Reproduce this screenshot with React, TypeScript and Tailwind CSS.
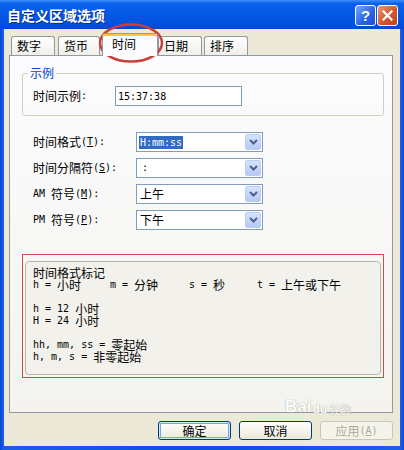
import React from "react";

function M({ t }: { t: string }) {
  const parts = t.match(/[\u2E80-\u9FFF\uFF00-\uFFEF]+|[^\u2E80-\u9FFF\uFF00-\uFFEF]+/g) || [];
  return (
    <>
      {parts.map((p, i) =>
        /[\u2E80-\u9FFF\uFF00-\uFFEF]/.test(p[0]) ? (
          <span key={i} className="inline-block align-top h-[12px] leading-[12px] whitespace-pre [font-family:'Noto_Sans_CJK_SC',sans-serif] text-[12px]">
            {p}
          </span>
        ) : (
          <span key={i} className="inline-block align-top h-[12px] leading-[12px] whitespace-pre [font-family:'DejaVu_Sans_Mono',monospace] text-[10px]">
            {p}
          </span>
        )
      )}
    </>
  );
}

function Label({ pre, ul }: { pre: string; ul: string }) {
  return (
    <span className="whitespace-pre">
      <M t={pre} />
      <span className="inline-block align-top h-[12px] leading-[12px] [font-family:'DejaVu_Sans_Mono',monospace] text-[10px]">
        (<span className="underline underline-offset-1">{ul}</span>):
      </span>
    </span>
  );
}

function Chevron() {
  return (
    <svg width="9" height="6" viewBox="0 0 9 6">
      <path d="M1 1 L4.5 4.5 L8 1" stroke="#4d6185" strokeWidth="2" fill="none" />
    </svg>
  );
}

function Combo({ children }: { children: React.ReactNode }) {
  return (
    <div className="w-[127px] h-[20px] border border-[#7f9db9] bg-white flex items-center pl-[2px] pr-[1px]">
      <div className="flex-1 flex items-center leading-[14px]">{children}</div>
      <div className="w-[16px] h-[16px] rounded-[2px] border border-[#b9cdf5] bg-[linear-gradient(180deg,#d6e3fd,#b5c9f5)] flex items-center justify-center">
        <Chevron />
      </div>
    </div>
  );
}

function Tab({ label, cls }: { label: string; cls: string }) {
  return (
    <div
      className={
        "h-[19px] border border-b-0 border-[#919b9c] rounded-t-[3px] bg-[linear-gradient(180deg,#fefefe,#f0efe9)] pl-[5px] leading-[18px] text-[12px] " +
        cls
      }
    >
      {label}
    </div>
  );
}

function Btn({ children, variant }: { children: React.ReactNode; variant: "default" | "normal" | "disabled" }) {
  const base =
    "w-[73px] h-[19px] rounded-[3px] border flex items-center justify-center text-[12px] leading-[14px] ";
  if (variant === "default")
    return (
      <div className={base + "border-[#003c74] bg-[linear-gradient(180deg,#ffffff,#ece9d8)] shadow-[inset_0_0_0_1px_#cee7ff,inset_0_0_0_2px_#7aa2ea]"}>
        {children}
      </div>
    );
  if (variant === "normal")
    return (
      <div className={base + "border-[#003c74] bg-[linear-gradient(180deg,#ffffff,#ece9d8)]"}>{children}</div>
    );
  return (
    <div className={base + "border-[#c9c7ba] bg-[#f5f4ea] text-[#aca899]"}>{children}</div>
  );
}

export default function App() {
  return (
    <div className="relative w-[404px] h-[450px] overflow-hidden flex flex-col bg-[linear-gradient(90deg,#0843d0,#1a5ee8_3px,#0a50dc_50%,#1a5ee8_calc(100%-3px),#0843d0)] [font-family:'Noto_Sans_CJK_SC',sans-serif] text-[12px] text-black">
      {/* title bar */}
      <div className="h-[29px] shrink-0 flex items-center pl-[7px] pr-[6px] bg-[linear-gradient(180deg,#3d8ff7_0%,#0b62e9_12%,#0459e6_45%,#0252df_78%,#0046cf_100%)]">
        <span className="text-white font-bold text-[14px] leading-[16px] [text-shadow:1px_1px_0_#0a2a8a]">
          自定义区域选项
        </span>
        <div className="ml-auto flex gap-[1px] mt-[1px]">
          <div className="w-[21px] h-[21px] rounded-[3px] border border-white bg-[linear-gradient(135deg,#76a8f8,#2a62e6_60%,#1c50d6)] flex items-center justify-center">
            <span className="text-white font-bold text-[15px] leading-[15px] [font-family:'Liberation_Sans',sans-serif]">?</span>
          </div>
          <div className="w-[21px] h-[21px] rounded-[3px] border border-white bg-[linear-gradient(135deg,#ec9a7c,#d4552f_55%,#c0401d)] flex items-center justify-center">
            <svg width="11" height="11" viewBox="0 0 11 11">
              <path d="M1.5 1.5 L9.5 9.5 M9.5 1.5 L1.5 9.5" stroke="white" strokeWidth="2.2" strokeLinecap="square" />
            </svg>
          </div>
        </div>
      </div>

      {/* body */}
      <div className="flex-1 mx-[4px] mb-[4px] bg-[#ece9d8] flex flex-col">
        {/* tabs */}
        <div className="h-[26px] flex items-end">
          <Tab label="数字" cls="ml-[7px] w-[44px]" />
          <Tab label="货币" cls="ml-[3px] w-[42px]" />
          <div className="relative z-10 ml-[2px] w-[56px] h-[23px] -mb-px border border-b-0 border-[#919b9c] border-t-[#e68b2c] rounded-t-[3px] bg-[#fcfcfe] shadow-[inset_0_2px_0_#ffc83c] pl-[9px] pt-[2px] leading-[16px] text-[12px]">
            时间
          </div>
          <Tab label="日期" cls="w-[44px]" />
          <Tab label="排序" cls="ml-[2px] w-[44px]" />
        </div>

        {/* panel */}
        <div className="ml-[5px] w-[384px] h-[358px] border border-[#919b9c] bg-[linear-gradient(180deg,#fcfcfe,#f4f3ee)] flex flex-col">
          <fieldset className="ml-[12px] mt-[10px] w-[362px] border border-[#d0d0bf] rounded-[3px] pb-[9px]">
            <legend className="ml-[5px] px-[2px] text-[#0046d5] leading-[14px] text-[12px]">示例</legend>
            <div className="flex items-center pl-[10px] mt-[6px]">
              <span className="w-[82px] leading-[12px]">
                <M t="时间示例:" />
              </span>
              <div className="w-[127px] h-[20px] border border-[#7f9db9] bg-white flex items-center pl-[2px] [font-family:'DejaVu_Sans_Mono',monospace] text-[10px]">
                15:37:38
              </div>
            </div>
          </fieldset>

          <div className="flex flex-col gap-[6px] mt-[16px] pl-[23px]">
            <div className="flex items-center h-[20px]">
              <span className="w-[103px] leading-[12px]">
                <Label pre="时间格式" ul="T" />
              </span>
              <Combo>
                <span className="bg-[#316ac5] text-white px-[1px] [font-family:'DejaVu_Sans_Mono',monospace] text-[10px] leading-[13px]">
                  H:mm:ss
                </span>
              </Combo>
            </div>
            <div className="flex items-center h-[20px]">
              <span className="w-[103px] leading-[12px]">
                <Label pre="时间分隔符" ul="S" />
              </span>
              <Combo>
                <span className="pl-[3px] [font-family:'DejaVu_Sans_Mono',monospace] text-[10px]">:</span>
              </Combo>
            </div>
            <div className="flex items-center h-[20px]">
              <span className="w-[103px] leading-[12px]">
                <Label pre="AM 符号" ul="M" />
              </span>
              <Combo>
                <span className="pl-[1px]">上午</span>
              </Combo>
            </div>
            <div className="flex items-center h-[20px]">
              <span className="w-[103px] leading-[12px]">
                <Label pre="PM 符号" ul="P" />
              </span>
              <Combo>
                <span className="pl-[1px]">下午</span>
              </Combo>
            </div>
          </div>

          {/* red box */}
          <div className="ml-[12px] mt-[24px] w-[362px] h-[124px] border border-[#cf4c4c] pt-[6px] px-[2px] pb-[2px] flex">
            <div className="flex-1 rounded-[4px] border border-[#b8b7ab] bg-[#f2f1eb] pl-[7px] pt-[5px] leading-[12px] whitespace-pre">
              <div className="h-[12px]"><M t="时间格式标记" /></div>
              <div className="h-[12px] flex">
                <span className="w-[77px]"><M t="h = 小时" /></span>
                <span className="w-[79px]"><M t="m = 分钟" /></span>
                <span className="w-[68px]"><M t="s = 秒" /></span>
                <span><M t="t = 上午或下午" /></span>
              </div>
              <div className="h-[12px]" />
              <div className="h-[12px]"><M t="h = 12 小时" /></div>
              <div className="h-[12px]"><M t="H = 24 小时" /></div>
              <div className="h-[12px]" />
              <div className="h-[12px]"><M t="hh, mm, ss = 零起始" /></div>
              <div className="h-[12px]"><M t="h, m, s = 非零起始" /></div>
            </div>
          </div>
        </div>

        {/* buttons */}
        <div className="flex justify-end gap-[8px] pr-[7px] mt-[8px]">
          <Btn variant="default">确定</Btn>
          <Btn variant="normal">取消</Btn>
          <Btn variant="disabled">
            应用<span className="[font-family:'DejaVu_Sans_Mono',monospace] text-[10px]">(<span className="underline">A</span>)</span>
          </Btn>
        </div>
      </div>

      {/* red ellipse annotation */}
      <svg className="absolute left-[98px] top-[22px]" width="66" height="42" viewBox="0 0 66 42">
        <ellipse cx="33" cy="21" rx="31" ry="18.5" stroke="#c8403e" strokeWidth="2.5" fill="none" />
      </svg>

      {/* watermark */}
      <div className="absolute left-[285px] top-[398px] flex items-end text-white opacity-90 [text-shadow:0_0_1px_#a9a79b,0_0_1px_#a9a79b] pointer-events-none">
        <span className="[font-family:'Liberation_Sans',sans-serif] font-bold text-[17px] leading-[17px]">Bai</span>
        <span className="[font-family:'Liberation_Sans',sans-serif] font-bold text-[12px] leading-[12px] ml-[1px]">du</span>
        <span className="text-[11px] leading-[12px] ml-[2px]">经验</span>
      </div>
    </div>
  );
}
